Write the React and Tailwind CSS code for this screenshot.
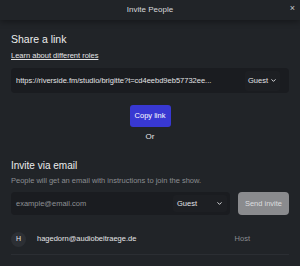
import React from "react";

const Chevron = ({ className }) => (
  <svg viewBox="0 0 12 12" className={className} fill="none" stroke="currentColor" strokeWidth="1.6" strokeLinecap="round" strokeLinejoin="round">
    <path d="M3 4.5l3 3 3-3" />
  </svg>
);

export default function App() {
  return (
    <div className="w-[300px] h-[266px] overflow-hidden bg-[#212428] text-white font-['Liberation_Sans',Arial,sans-serif] flex flex-col">
      {/* Header */}
      <div className="relative h-[20px] shrink-0 flex items-center justify-center bg-[#212428] shadow-[0_2px_6px_rgba(0,0,0,0.35)]">
        <span className="text-[8px] text-[#d8d9db]">Invite People</span>
        <span className="absolute right-[5px] top-[4px] text-[9px] leading-none text-[#c9cacc]">×</span>
      </div>

      <div className="px-[11px] flex flex-col">
        <h2 className="mt-[13px] text-[10.5px] leading-[13px] text-[#eceded]">Share a link</h2>
        <a className="mt-[5px] text-[7.5px] leading-[10px] underline text-[#e4e5e7]">Learn about different roles</a>

        <div className="mt-[7px] h-[25px] rounded-[4px] bg-[#1a1c20] flex items-center pl-[5px] pr-[9px]">
          <span className="flex-1 min-w-0 whitespace-nowrap overflow-hidden text-[7.5px] text-[#e2e3e5]">https://riverside.fm/studio/brigitte?t=cd4eebd9eb57732ee...</span>
          <div className="ml-[8px] shrink-0 h-[20px] w-[35px] rounded-[3px] bg-[#1d1f23] flex items-center justify-center gap-[2px] text-[7.5px] text-[#e2e3e5]">
            Guest
            <Chevron className="w-[7px] h-[7px]" />
          </div>
        </div>

        <div className="mt-[12px] flex justify-center">
          <button className="h-[22px] w-[41px] rounded-[3px] bg-[#3838d2] text-[7.5px] text-white">Copy link</button>
        </div>
        <div className="mt-[5px] text-center text-[8px] leading-[10px] text-[#e4e5e7]">Or</div>

        <h2 className="mt-[18px] text-[10px] leading-[12px] text-[#eceded]">Invite via email</h2>
        <p className="mt-[4px] text-[7.5px] leading-[9px] text-[#8b8d91]">People will get an email with instructions to join the show.</p>

        <div className="mt-[7px] flex gap-[8px]">
          <div className="flex-1 h-[23px] rounded-[4px] bg-[#1a1c20] flex items-center pl-[5px] pr-[3px]">
            <span className="flex-1 text-[7.5px] text-[#8e9095]">example@email.com</span>
            <div className="h-[17px] w-[54px] rounded-[3px] bg-[#1d1f23] flex items-center justify-between px-[4px] text-[7.5px] text-[#e2e3e5]">
              Guest
              <Chevron className="w-[7px] h-[7px]" />
            </div>
          </div>
          <button className="h-[23px] w-[51px] rounded-[4px] bg-[#8a8b8e] text-[7.5px] text-[#dcdddf]">Send invite</button>
        </div>

        <div className="mt-[9px] h-[31px] flex items-center border-b border-[#2b2e33]">
          <div className="w-[15px] h-[15px] rounded-full bg-[#2c2f34] flex items-center justify-center text-[7px] text-[#e4e5e7]">H</div>
          <span className="ml-[11px] flex-1 text-[7.5px] text-[#e4e5e7]">hagedorn@audiobeitraege.de</span>
          <span className="mr-[39px] text-[7.5px] text-[#8b8d91]">Host</span>
        </div>
      </div>
    </div>
  );
}
